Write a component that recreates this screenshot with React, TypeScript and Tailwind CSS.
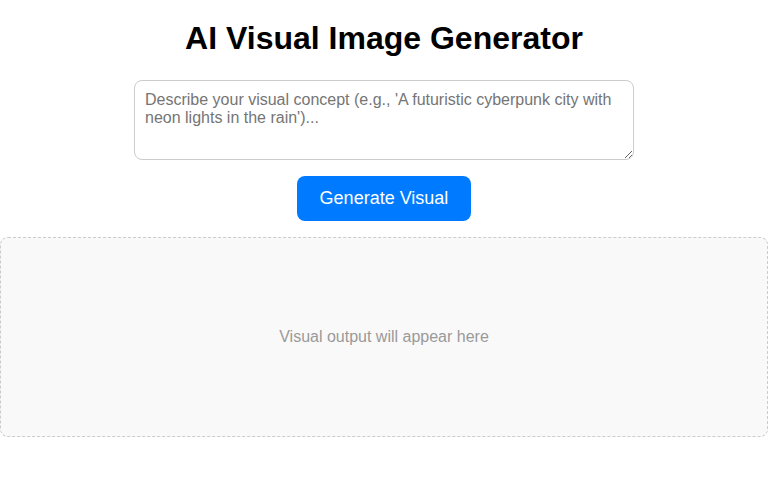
import React from "react";

export default function App() {
  return (
    <div className="w-[768px] min-h-[480px] bg-white pt-5 flex flex-col items-center" style={{ fontFamily: '"Liberation Sans", Arial, sans-serif' }}>
      <h1 className="text-[32px] font-bold leading-[1.15] text-black m-0 mb-[23px]">AI Visual Image Generator</h1>
      <textarea
        className="w-[500px] h-[80px] border border-[#cccccc] rounded-lg p-[10px] text-[16px] leading-[1.15] text-black placeholder:text-[#757575] resize-y block outline-none"
        style={{ fontFamily: '"Liberation Sans", Arial, sans-serif' }}
        placeholder="Describe your visual concept (e.g., 'A futuristic cyberpunk city with neon lights in the rain')..."
      />
      <button className="mt-4 h-[45px] px-[23px] bg-[#007bff] text-white text-[18px] leading-[1.15] rounded-lg">
        Generate Visual
      </button>
      <div className="mt-4 w-full h-[200px] border border-dashed border-[#cccccc] rounded-lg bg-[#f9f9f9] flex items-center justify-center">
        <span className="text-[16px] text-[#999999]">Visual output will appear here</span>
      </div>
    </div>
  );
}
